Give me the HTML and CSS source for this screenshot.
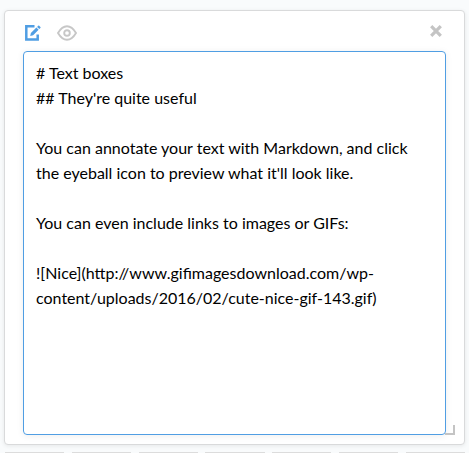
FILE: index.html
```html
<!DOCTYPE html>
<html lang="en">
<head>
<meta charset="utf-8">
<title>Text card</title>
<link rel="stylesheet" href="styles.css">
</head>
<body>
<main class="card">
  <header class="toolbar">
    <svg class="edit" width="17" height="18" viewBox="0 0 17 18"><path d="M10.5 2.3H2.3v13.2h11.4v-5" fill="none" stroke="currentColor" stroke-width="2.5"/><path d="M6.2 12.1l.7-3 5.5-5.5 2.2 2.2-5.5 5.5zM13.1 2.9l1.1-1.1q.5-.5 1 0l1.2 1.2q.5.5 0 1l-1.1 1.1z" fill="currentColor"/></svg>
    <svg class="eye" width="20" height="16" viewBox="0 0 20 16"><path d="M1 8Q5 1.2 10 1.2T19 8Q15 14.8 10 14.8T1 8Z" fill="none" stroke="currentColor" stroke-width="1.9"/><circle cx="10" cy="8" r="2.8" fill="none" stroke="currentColor" stroke-width="1.9"/></svg>
    <svg class="close" width="12" height="12" viewBox="0 0 12 12"><path d="M1.2 1.2l9.6 9.6m0-9.6l-9.6 9.6" stroke="currentColor" stroke-width="3.2"/></svg>
  </header>
  <div class="editor" contenteditable="true" spellcheck="false"># Text boxes
## They're quite useful

You can annotate your text with Markdown, and click the eyeball icon to preview what it'll look like.

You can even include links to images or GIFs:

![Nice](http://www.gifimagesdownload.com/wp-content/uploads/2016/02/cute-nice-gif-143.gif)</div>
  <span class="resize"></span>
</main>
<div class="grid-row"><i></i><i></i><i></i><i></i><i></i><i></i><i></i></div>
</body>
</html>
```
FILE: styles.css
```css
* {
  box-sizing: border-box;
}

body {
  margin: 0;
  padding: 10px 4px 0;
  height: 453px;
  overflow: hidden;
  background: #f9fbfc;
  font-family: Lato, "Liberation Sans", sans-serif;
}

.card {
  position: relative;
  width: 461px;
  height: 435px;
  padding: 0 18px;
  background: #fff;
  border: 1px solid #d9dadb;
  border-radius: 4px;
  box-shadow: 0 1px 4px rgba(0, 0, 0, .08);
}

.toolbar {
  display: flex;
  align-items: flex-start;
  height: 40px;
  padding: 13px 4px 0 1px;
}

.edit {
  color: #509ee3;
}

.eye {
  margin: 1px 0 0 16px;
  color: #c7c7c7;
}

.close {
  margin: 1px 0 0 auto;
  color: #c4c4c4;
}

.editor {
  width: 423px;
  height: 384px;
  padding: 8px 12px;
  border: 1px solid #509ee3;
  border-radius: 4px;
  box-shadow: 0 1px 7px rgba(0, 0, 0, .07);
  color: #000;
  font-size: 16px;
  line-height: 25px;
  white-space: pre-wrap;
  outline: none;
}

.resize {
  position: absolute;
  right: 9px;
  bottom: 9px;
  width: 10px;
  height: 10px;
  border-right: 2px solid #c4c4c4;
  border-bottom: 2px solid #c4c4c4;
}

.grid-row {
  display: grid;
  grid-template-columns: repeat(7, 1fr);
  gap: 7.6px;
  width: 460px;
  margin: 7px 0 0 1px;
}

.grid-row i {
  height: 10px;
  background: #f9fbfc;
  border-top: 1px solid #dcdcdc;
}
```
